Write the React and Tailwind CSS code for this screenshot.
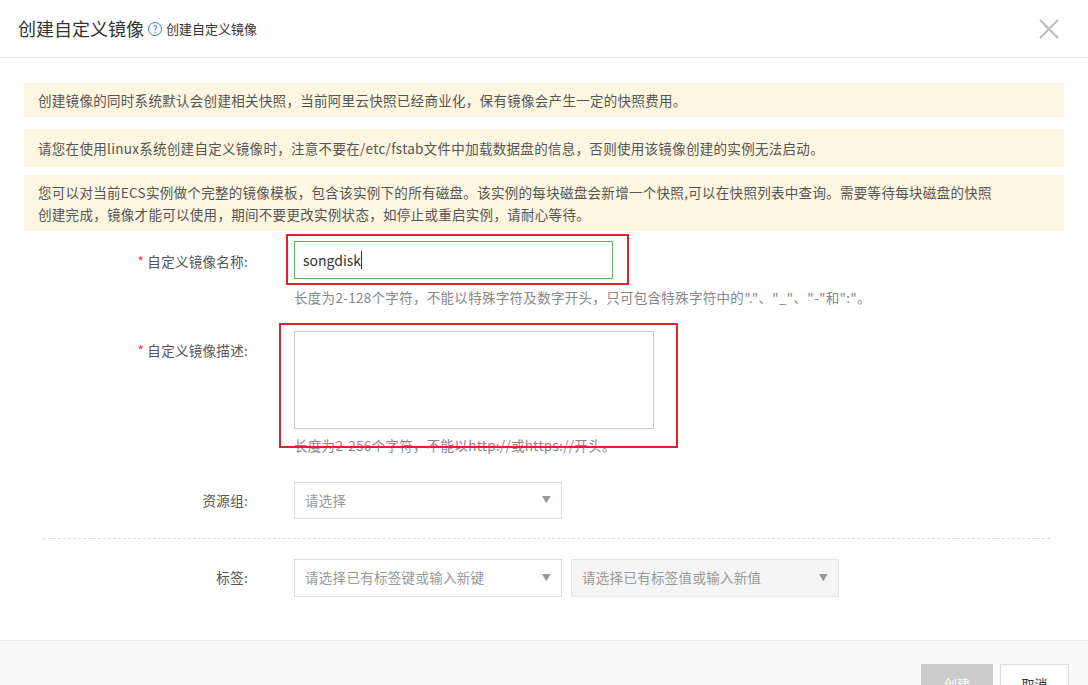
const F = { fontFamily: '"Noto Sans CJK SC","Noto Sans",sans-serif' };
function Caret(){return <span className="text-[9px] text-[#999]">▼</span>;}
export default function App(){
  return (
    <div style={F} className="relative w-[1088px] h-[685px] bg-white overflow-hidden text-[#333]">
      <div className="h-[58px] border-b border-[#e5e5e5] flex items-center px-[18px]">
        <span className="text-[18px] text-[#333]">创建自定义镜像</span>
        <span className="ml-[4px] w-[14px] h-[14px] rounded-full border border-[#2a7fd4] text-[#2a7fd4] text-[10px] leading-[12px] text-center">?</span>
        <span className="ml-[4px] text-[13px]">创建自定义镜像</span>
        <svg className="ml-auto mr-[10px]" width="22" height="22" viewBox="0 0 22 22"><path d="M2 2L20 20M20 2L2 20" stroke="#bbb" strokeWidth="2"/></svg>
      </div>
      <div className="px-[24px] pt-[25px] flex flex-col gap-[12px] text-[13.5px] tracking-[0.3px] text-[#555]">
        <div className="bg-[#fdf6e0] h-[34px] flex items-center px-[14px]">创建镜像的同时系统默认会创建相关快照，当前阿里云快照已经商业化，保有镜像会产生一定的快照费用。</div>
        <div className="bg-[#fdf6e0] h-[38px] flex items-center px-[14px]">请您在使用linux系统创建自定义镜像时，注意不要在/etc/fstab文件中加载数据盘的信息，否则使用该镜像创建的实例无法启动。</div>
        <div className="bg-[#fdf6e0] h-[56px] flex flex-col justify-center px-[14px] leading-[22px] -mt-[4px] whitespace-nowrap">
          <div>您可以对当前ECS实例做个完整的镜像模板，包含该实例下的所有磁盘。该实例的每块磁盘会新增一个快照,可以在快照列表中查询。需要等待每块磁盘的快照</div>
          <div>创建完成，镜像才能可以使用，期间不要更改实例状态，如停止或重启实例，请耐心等待。</div>
        </div>
      </div>
      <div className="text-[13.5px] tracking-[0.3px]">
        <div className="flex mt-[10px]">
          <div className="w-[294px] pr-[46px] text-right pt-[10px] text-[#555]"><span className="text-[#e33]">* </span>自定义镜像名称:</div>
          <div>
            <div className="w-[319px] h-[38px] border border-[#5cb85c] flex items-center px-[8px] text-[14px] text-[#333] tracking-normal">songdisk<span className="w-px h-[18px] bg-[#333]"/></div>
            <div className="mt-[8px] text-[#888] whitespace-nowrap">长度为2-128个字符，不能以特殊字符及数字开头，只可包含特殊字符中的"."、"_"、"-"和":"。</div>
          </div>
        </div>
        <div className="flex mt-[24px]">
          <div className="w-[294px] pr-[46px] text-right pt-[9px] text-[#555]"><span className="text-[#e33]">* </span>自定义镜像描述:</div>
          <div>
            <div className="w-[360px] h-[98px] border border-[#ccc]"/>
            <div className="mt-[6px] text-[#888]">长度为2-256个字符，不能以http://或https://开头。</div>
          </div>
        </div>
        <div className="flex mt-[26px] items-center">
          <div className="w-[294px] pr-[46px] text-right text-[#555]">资源组:</div>
          <div className="w-[268px] h-[37px] border border-[#ddd] flex items-center justify-between px-[10px] text-[#999]">请选择<Caret/></div>
        </div>
        <div className="mx-[43px] mt-[19px] border-t border-dashed border-[#ddd] w-[1007px]"/>
        <div className="flex mt-[20px] items-center">
          <div className="w-[294px] pr-[46px] text-right text-[#555]">标签:</div>
          <div className="w-[268px] h-[38px] border border-[#ddd] flex items-center justify-between px-[10px] text-[#999]">请选择已有标签键或输入新键<Caret/></div>
          <div className="ml-[9px] w-[268px] h-[38px] border border-[#e5e5e5] bg-[#f5f5f5] flex items-center justify-between px-[10px] text-[#999]">请选择已有标签值或输入新值<Caret/></div>
        </div>
      </div>
      <div className="absolute left-0 right-0 top-[640px] bottom-0 border-t border-[#e5e5e5] bg-[#fafafa] flex justify-end items-start pt-[23px] pr-[19px] gap-[7px] text-[13px]">
        <div className="w-[72px] h-[40px] bg-[#ccc] text-white flex items-center justify-center">创建</div>
        <div className="w-[69px] h-[40px] bg-white border border-[#ddd] flex items-center justify-center">取消</div>
      </div>
      <div className="absolute left-[286px] top-[234px] w-[343px] h-[51px] border-2 border-[#e0222e]"/>
      <div className="absolute left-[279px] top-[323px] w-[399px] h-[125px] border-2 border-[#e0222e]"/>
    </div>
  );
}
